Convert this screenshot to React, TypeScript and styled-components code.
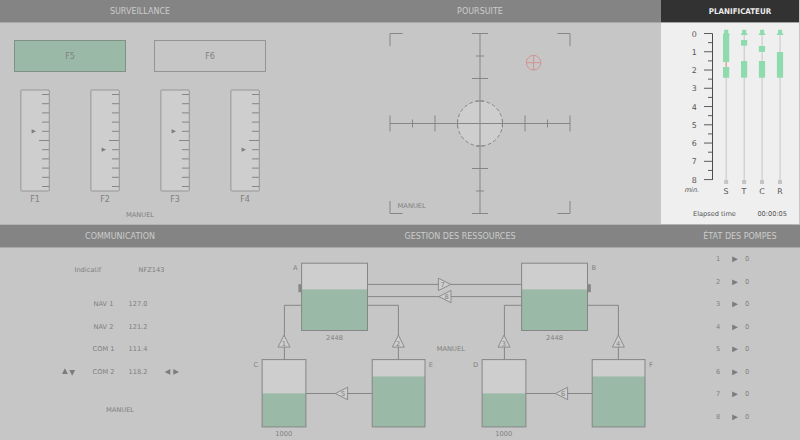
import React from "react";
import styled, { createGlobalStyle } from "styled-components";

const ink = "#868686";
const green = "#9abaa7";
const pale = "#cecece";

const GlobalStyle = createGlobalStyle`
  body {
    margin: 0;
    background: #c6c6c6;
    font-family: "DejaVu Sans", sans-serif;
    overflow: hidden;
  }
  svg { display: block; flex: none; }
  svg text { font-family: "DejaVu Sans", sans-serif; font-size: 6.7px; fill: #808080; }
`;

const Screen = styled.main`
  width: 800px;
  height: 440px;
  display: grid;
  grid-template-rows: 225px 215px;
`;

const PanelRow = styled.div<{ $columns: string }>`
  display: grid;
  grid-template-columns: ${(p) => p.$columns};
`;

const Panel = styled.section<{ $active?: boolean; $divided?: boolean }>`
  box-sizing: border-box;
  display: flex;
  flex-direction: column;
  color: ${(p) => (p.$active ? "#545454" : "#808080")};
  background: ${(p) => (p.$active ? "#efefef" : "#c6c6c6")};
  border-right: ${(p) => (p.$active ? "1px solid #c6c6c6" : "none")};
  border-bottom: ${(p) => (p.$divided ? "1px solid #b4b4b4" : "none")};
`;

const PanelTitle = styled.h2<{ $active?: boolean; $inset?: number }>`
  margin: 0;
  height: 22px;
  box-sizing: border-box;
  padding: 1px 0 0 ${(p) => p.$inset ?? 0}px;
  box-shadow: 0 1px 0 ${(p) => (p.$active ? "#a2a2a2" : "#a8a8a8")};
  display: flex;
  align-items: center;
  justify-content: center;
  flex: none;
  font-family: ${(p) => (p.$active ? '"DejaVu Sans Condensed", "DejaVu Sans"' : '"DejaVu Sans"')}, sans-serif;
  font-stretch: ${(p) => (p.$active ? "condensed" : "normal")};
  font-size: ${(p) => (p.$active ? "7.9px" : "8px")};
  font-weight: ${(p) => (p.$active ? 700 : 400)};
  color: ${(p) => (p.$active ? "#ececec" : "#cccccc")};
  background: ${(p) => (p.$active ? "#323232" : "#848484")};
  white-space: nowrap;
`;

const LampRow = styled.div`
  display: flex;
  gap: 28px;
  padding: 18px 14px 0;
`;

const Lamp = styled.div<{ $lit?: boolean }>`
  box-sizing: border-box;
  width: 112px;
  height: 32px;
  border: 1px solid ${(p) => (p.$lit ? "#7d9186" : "#949494")};
  display: flex;
  align-items: center;
  justify-content: center;
  font-size: 8px;
  background: ${(p) => (p.$lit ? green : "transparent")};
`;

const GaugeRow = styled.div`
  display: flex;
  gap: 40px;
  padding: 17px 20px 0;
`;

const Gauge = styled.div`
  width: 30px;
  display: flex;
  flex-direction: column;
  align-items: center;
`;

const GaugeLabel = styled.span`
  font-size: 8px;
  line-height: 10px;
  margin-top: 3px;
`;

const Mode = styled.div<{ $gap: number }>`
  margin-top: ${(p) => p.$gap}px;
  font-size: 6.7px;
  line-height: 10px;
  text-align: center;
`;

const ElapsedRow = styled.div`
  display: flex;
  justify-content: space-between;
  padding: 0 12px 0 32px;
  font-size: 6.6px;
  line-height: 10px;
  margin-top: 9px;
  white-space: nowrap;
`;

const Callsign = styled.div`
  display: grid;
  grid-template-columns: 64px 40px;
  padding: 18px 0 0 74.5px;
  font-size: 6.6px;
  line-height: 10px;
  margin-bottom: 18px;
`;

const RadioRow = styled.div`
  display: grid;
  grid-template-columns: 14px 55px 33px 16px;
  justify-content: start;
  align-items: center;
  padding-left: 62px;
  height: 22.5px;
  font-size: 6.6px;
  line-height: 10px;
  white-space: nowrap;
`;

const RadioName = styled.span`
  text-align: center;
`;

const Frequency = styled.span`
  margin-left: -2.5px;
`;

const PumpList = styled.div`
  padding-top: 1px;
`;

const PumpRow = styled.div`
  display: grid;
  grid-template-columns: 12px 17px 12px;
  padding-left: 32px;
  height: 22.5px;
  align-items: center;
  text-align: center;
  font-size: 6.6px;
  line-height: 10px;
`;

function Title({ children, active, inset }: { children: string; active?: boolean; inset?: number }) {
  return <PanelTitle $active={active} $inset={inset}>{children}</PanelTitle>;
}

function Scale({ level }: { level: number }) {
  return (
    <svg width="30" height="103" viewBox="0 0 30 103">
      <rect x="0.9" y="1" width="28.4" height="101" rx="0.8" fill={pale} stroke="#969696" />
      {Array.from({ length: 11 }, (_, i) => (
        <line key={i} x1={i === 5 ? 19 : 22} x2="29" y1={5.5 + i * 9.2} y2={5.5 + i * 9.2} stroke={ink} />
      ))}
      <path d={`M11.6 ${5.5 + level * 9.2 - 2.1} l4.4 2.1 l-4.4 2.1 z`} fill="#7c7c7c" />
    </svg>
  );
}

function Surveillance() {
  return (
    <Panel $divided>
      <Title>SURVEILLANCE</Title>
      <LampRow>
        <Lamp $lit>F5</Lamp>
        <Lamp>F6</Lamp>
      </LampRow>
      <GaugeRow>
        {[4, 6, 4, 6].map((level, i) => (
          <Gauge key={i}>
            <Scale level={level} />
            <GaugeLabel>F{i + 1}</GaugeLabel>
          </Gauge>
        ))}
      </GaugeRow>
      <Mode $gap={5}>MANUEL</Mode>
    </Panel>
  );
}

function Tracking() {
  return (
    <Panel $divided>
      <Title inset={19}>POURSUITE</Title>
      <svg width="380" height="202" viewBox="280 22 380 202">
        <circle cx="480" cy="123.5" r="22.5" fill={pale} stroke={ink} strokeDasharray="3.5 2.4" />
        <g fill="none" stroke={ink}>
          <path d="M480 33.5V213.5M390 123.5H570" />
          <path d="M402.5 33.5H390V46M557.5 33.5H570V46M402.5 213.5H390V201M557.5 213.5H570V201" />
          <path d="M472 33.5h16M476 56h8M472 78.5h16M476 101h8M476 146h8M472 168.5h16M476 191h8M472 213.5h16" />
          <path d="M390 115.5v16M412.5 119.5v8M435 115.5v16M457.5 119.5v8M502.5 119.5v8M525 115.5v16M547.5 119.5v8M570 115.5v16" />
        </g>
        <g fill="none" stroke="#d28c8c" strokeWidth="0.9">
          <circle cx="533.6" cy="62.7" r="7.3" />
          <path d="M526.3 62.7h14.6M533.6 55.4v14.6" />
        </g>
        <text x="397.6" y="207.6">MANUEL</text>
      </svg>
    </Panel>
  );
}

const tracks = [
  { x: 726.2, name: "S", blocks: [[34, 62], [67, 77.7]] },
  { x: 744.2, name: "T", blocks: [[40, 45.7], [61, 77.7]] },
  { x: 762.1, name: "C", blocks: [[46, 51.9], [61, 77.7]] },
  { x: 780.1, name: "R", blocks: [[52, 77.7]] },
];

const SchedulerChart = styled.svg`
  && text { fill: #545454; font-size: 7.9px; }
  && text.unit { font-size: 6.6px; font-style: italic; }
`;

function Scheduler() {
  return (
    <Panel $active $divided>
      <Title active inset={20}>PLANIFICATEUR</Title>
      <SchedulerChart width="138" height="178" viewBox="661 22 138 178">
        <path d="M712.5 33.5V180" stroke="#4c4c4c" fill="none" />
        {Array.from({ length: 17 }, (_, i) => {
          const y = 33.5 + i * 9.13;
          return <line key={i} x1={i % 2 ? 708 : 704} x2="712.5" y1={y} y2={y} stroke="#5c5c5c" />;
        })}
        {Array.from({ length: 9 }, (_, i) => (
          <text key={i} x="694.2" y={36.6 + i * 18.25} textAnchor="middle">{i}</text>
        ))}
        <text className="unit" x="684.7" y="192">min.</text>
        {tracks.map((t) => (
          <g key={t.name}>
            <line x1={t.x} x2={t.x} y1="34" y2="180" stroke="#c6c6c6" />
            <path d={`M${t.x - 2} 29.7h4v3.3l1.2 0.7v1.3h-6.4v-1.3l1.2-0.7z`} fill="#8edbae" />
            {t.name === "S" && <line x1={t.x} x2={t.x} y1="62" y2="67" stroke="#ec9090" />}
            {t.blocks.map(([a, b]) => (
              <rect key={a} x={t.x - 3.2} y={a} width="6.2" height={b - a} fill="#8edbae" />
            ))}
            <rect x={t.x - 2.1} y="180" width="4" height="4" fill="#c4c4c4" />
            <text x={t.x - 0.2} y="193.6" textAnchor="middle">{t.name}</text>
          </g>
        ))}
      </SchedulerChart>
      <ElapsedRow>
        <span>Elapsed time</span>
        <span>00:00:05</span>
      </ElapsedRow>
    </Panel>
  );
}

const radios = [
  { name: "NAV 1", frequency: "127.0" },
  { name: "NAV 2", frequency: "121.2" },
  { name: "COM 1", frequency: "111.4" },
  { name: "COM 2", frequency: "118.2", selected: true },
];

function Communication() {
  return (
    <Panel>
      <Title>COMMUNICATION</Title>
      <Callsign>
        <span>Indicatif</span>
        <span>NFZ143</span>
      </Callsign>
      {radios.map((radio) => (
        <RadioRow key={radio.name}>
          <svg width="14" height="8" viewBox="0 0 14 8" fill="#7c7c7c">
            {radio.selected && <path d="M0 6.1L2.9 0.3L5.8 6.1zM7.3 2L10.2 7.8L13.1 2z" />}
          </svg>
          <RadioName>{radio.name}</RadioName>
          <Frequency>{radio.frequency}</Frequency>
          <svg width="16" height="8" viewBox="0 0 16 8" fill="#7c7c7c">
            {radio.selected && <path d="M0.7 3.9L6.3 1V6.8zM9.3 1L15 3.9L9.3 6.8z" />}
          </svg>
        </RadioRow>
      ))}
      <Mode $gap={22}>MANUEL</Mode>
    </Panel>
  );
}

type TankProps = { x: number; y: number; w: number; fill: number; h?: number };

function Tank({ x, y, w, fill, h = 67.3 }: TankProps) {
  return (
    <g>
      <rect x={x} y={y} width={w} height={h} fill={pale} />
      <rect x={x} y={fill} width={w} height={y + h - fill} fill={green} />
      <rect x={x} y={y} width={w} height={h} fill="none" stroke={ink} />
    </g>
  );
}

function Pump({ x, y, dir, n }: { x: number; y: number; dir: "up" | "left" | "right"; n: number }) {
  const d = {
    up: "M0 -6.2L6 5.8H-6z",
    left: "M-6.2 0L6 -6.2V6.2z",
    right: "M6.4 0L-6 -6.2V6.2z",
  }[dir];
  const dx = dir === "left" ? 1.6 : dir === "right" ? -1.8 : -0.2;
  return (
    <g transform={`translate(${x} ${y})`}>
      <path d={d} fill={pale} stroke={ink} strokeWidth="0.9" />
      <text x={dx} y={dir === "up" ? 4.3 : 2.4} textAnchor="middle">{n}</text>
    </g>
  );
}

function TankSystem({ x, firstPump }: { x: number; firstPump: number }) {
  return (
    <g transform={`translate(${x} 0)`}>
      <path
        d="M301.5 305.3H284.4V359.5M367.5 305.3H398.4V359.5M306 393.5H372"
        fill="none"
        stroke={ink}
      />
      <Tank x={301.6} y={263.2} w={65.9} fill={289.4} />
      <Tank x={262.1} y={359.6} w={43.8} fill={393.4} />
      <Tank x={372.2} y={359.6} w={52.8} fill={376.5} />
      <Pump x={284} y={341.3} dir="up" n={firstPump} />
      <Pump x={398.4} y={341.3} dir="up" n={firstPump + 1} />
      <Pump x={341.6} y={393.5} dir="left" n={firstPump === 1 ? 5 : 6} />
      <text x="334.5" y="339.9" textAnchor="middle">2448</text>
      <text x="283.8" y="436.2" textAnchor="middle">1000</text>
    </g>
  );
}

function Resources() {
  return (
    <Panel>
      <Title>GESTION DES RESSOURCES</Title>
      <svg width="440" height="193" viewBox="240 247 440 193">
        <path d="M367.5 284.4H521.5M367.5 296.6H521.5" stroke={ink} />
        <TankSystem x={0} firstPump={1} />
        <TankSystem x={220} firstPump={3} />
        <Pump x={444.4} y={284.4} dir="right" n={7} />
        <Pump x={445} y={296.6} dir="left" n={8} />
        <rect x="298.4" y="284.2" width="3.2" height="8" fill={ink} />
        <rect x="587.6" y="284.2" width="3.2" height="8" fill={ink} />
        <text x="295.2" y="270.2" textAnchor="middle">A</text>
        <text x="593.9" y="270.2" textAnchor="middle">B</text>
        <text x="255.8" y="366.7" textAnchor="middle">C</text>
        <text x="475.6" y="366.7" textAnchor="middle">D</text>
        <text x="430.9" y="366.7" textAnchor="middle">E</text>
        <text x="651" y="366.7" textAnchor="middle">F</text>
        <text x="450.8" y="351.3" textAnchor="middle">MANUEL</text>
      </svg>
    </Panel>
  );
}

function PumpStatus() {
  return (
    <Panel>
      <Title>ÉTAT DES POMPES</Title>
      <PumpList>
        {Array.from({ length: 8 }, (_, i) => (
          <PumpRow key={i}>
            <span>{i + 1}</span>
            <svg width="17" height="8" viewBox="0 0 17 8" fill="#7c7c7c">
              <path d="M8.2 1.4L14 4.3L8.2 7.2z" />
            </svg>
            <span>0</span>
          </PumpRow>
        ))}
      </PumpList>
    </Panel>
  );
}

export default function App() {
  return (
    <>
      <GlobalStyle />
      <Screen>
        <PanelRow $columns="280px 381px 139px">
          <Surveillance />
          <Tracking />
          <Scheduler />
        </PanelRow>
        <PanelRow $columns="240px 440px 120px">
          <Communication />
          <Resources />
          <PumpStatus />
        </PanelRow>
      </Screen>
    </>
  );
}
